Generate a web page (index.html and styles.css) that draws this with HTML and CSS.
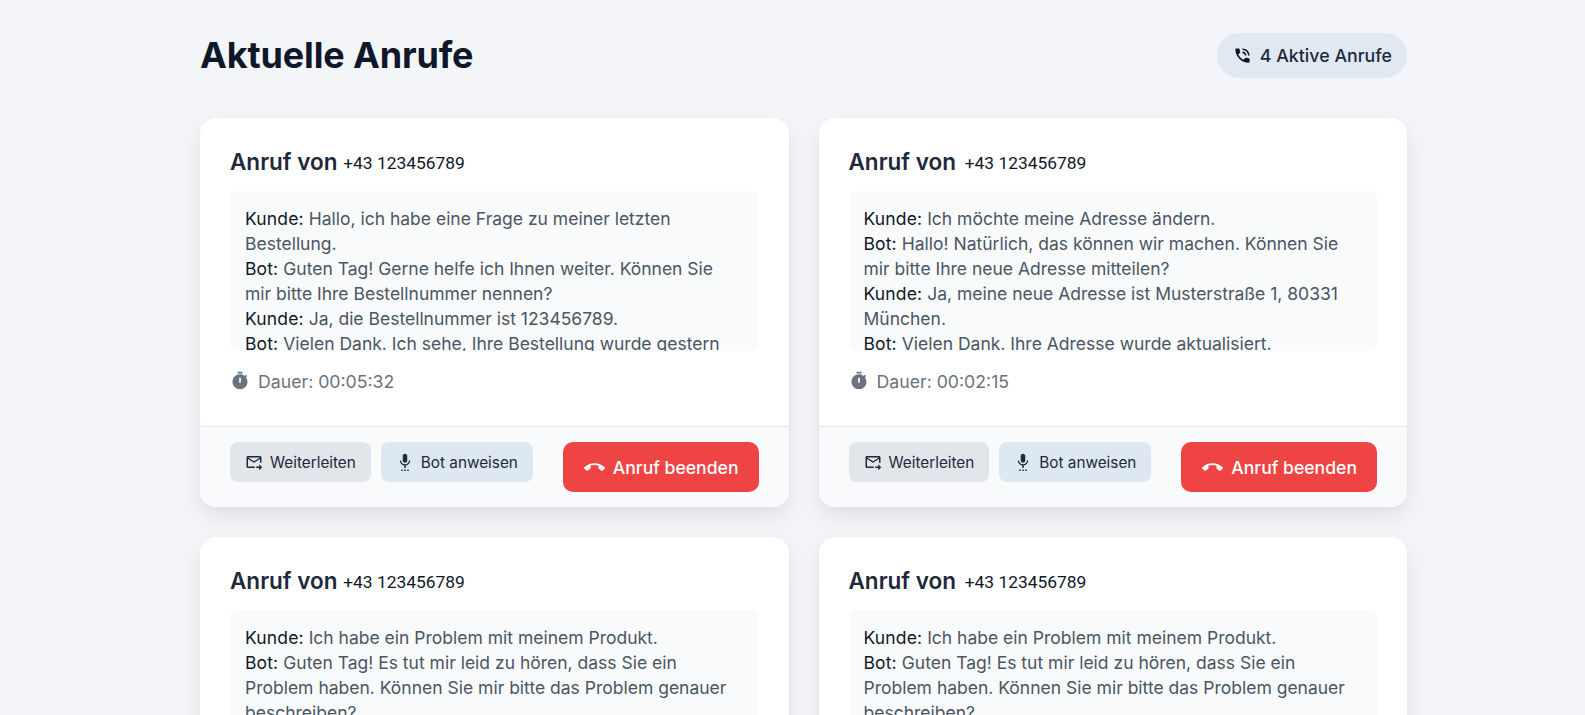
FILE: index.html
```html
<!DOCTYPE html>
<html lang="de">

<head>
    <meta charset="UTF-8">
    <title>Aktuelle Anrufe</title>
    <link rel="stylesheet" href="styles.css">
</head>

<body>
    <div class="page">
        <div class="head">
            <h1>Aktuelle Anrufe</h1>
            <div class="badge">
                <svg class="icon-phone" viewBox="0 0 24 24"><path d="M20 15.500c-1.250 0-2.450-.2-3.570-.57-.35-.11-.74-.03-1.020.24l-2.200 2.200c-2.830-1.440-5.150-3.750-6.590-6.590l2.200-2.210c.28-.26.36-.65.25-1C8.700 6.450 8.500 5.250 8.500 4c0-.55-.45-1-1-1H4c-.55 0-1 .45-1 1 0 9.390 7.610 17 17 17 .55 0 1-.45 1-1v-3.500c0-.55-.45-1-1-1zM19 12h2c0-4.970-4.030-9-9-9v2c3.870 0 7 3.130 7 7zm-4 0h2c0-2.760-2.240-5-5-5v2c1.660 0 3 1.340 3 3z"/></svg>
                4 Aktive Anrufe
            </div>
        </div>

        <div class="grid">
            <div class="card">
                <div class="card-body">
                    <h2>Anruf von <span class="nummer">+43 123456789</span></h2>
                    <div class="chat">
                        <b>Kunde:</b> Hallo, ich habe eine Frage zu meiner letzten Bestellung.<br>
                        <b>Bot:</b> Guten Tag! Gerne helfe ich Ihnen weiter. Können Sie mir bitte Ihre Bestellnummer nennen?<br>
                        <b>Kunde:</b> Ja, die Bestellnummer ist 123456789.<br>
                        <b>Bot:</b> Vielen Dank. Ich sehe, Ihre Bestellung wurde gestern versandt.
                    </div>
                    <div class="dauer">
                        <svg class="icon-timer" viewBox="0 0 24 24"><path fill-rule="evenodd" d="M15 1H9v2h6V1zm-4 13h2V8h-2v6zm8.030-6.610l1.420-1.420c-.43-.51-.9-.99-1.410-1.410l-1.420 1.420C16.070 4.740 14.120 4 12 4c-4.970 0-9 4.030-9 9s4.020 9 9 9 9-4.030 9-9c0-2.120-.74-4.070-1.970-5.610z"/></svg>
                        Dauer: 00:05:32
                    </div>
                </div>
                <div class="card-foot">
                    <div class="btn-group">
                        <button class="btn btn-grey">
                            <svg class="icon-btn" viewBox="0 0 24 24"><path d="M20 4H4c-1.100 0-2 .9-2 2v12c0 1.100.9 2 2 2h9v-2H4V8l8 5 8-5v5h2V6c0-1.100-.9-2-2-2zm-8 7L4 6h16l-8 5zm7 4l4 4-4 4v-3h-4v-2h4v-3z"/></svg>
                            Weiterleiten
                        </button>
                        <button class="btn btn-blue">
                            <svg class="icon-btn" viewBox="0 0 24 24"><path d="M7 24h2v-2H7v2zm5-11c1.660 0 2.990-1.340 2.990-3L15 4c0-1.660-1.340-3-3-3S9 2.340 9 4v6c0 1.660 1.340 3 3 3zm-1 11h2v-2h-2v2zm4 0h2v-2h-2v2zm4-14h-1.700c0 3-2.540 5.100-5.300 5.100S6.700 13 6.700 10H5c0 3.410 2.720 6.230 6 6.720V20h2v-3.280c3.280-.49 6-3.310 6-6.720z"/></svg>
                            Bot anweisen
                        </button>
                    </div>
                    <button class="btn-end">
                        <svg class="icon-end" viewBox="0 0 24 24"><path d="M12 9c-1.600 0-3.150.25-4.600.72v3.100c0 .39-.23.74-.56.9-.98.49-1.870 1.120-2.660 1.850-.18.18-.43.28-.7.28-.28 0-.53-.11-.71-.29L.29 13.080c-.18-.17-.29-.42-.29-.7 0-.28.11-.53.29-.71C3.340 8.780 7.460 7 12 7s8.660 1.780 11.710 4.670c.18.18.29.43.29.71 0 .28-.11.53-.29.71l-2.480 2.480c-.18.18-.43.29-.71.29-.27 0-.52-.11-.7-.28-.79-.74-1.690-1.360-2.670-1.850-.33-.16-.56-.5-.56-.9v-3.100C15.150 9.250 13.600 9 12 9z"/></svg>
                        Anruf beenden
                    </button>
                </div>
            </div>

            <div class="card">
                <div class="card-body">
                    <h2>Anruf von <span class="nummer">+43 123456789</span></h2>
                    <div class="chat">
                        <b>Kunde:</b> Ich möchte meine Adresse ändern.<br>
                        <b>Bot:</b> Hallo! Natürlich, das können wir machen. Können Sie mir bitte Ihre neue Adresse mitteilen?<br>
                        <b>Kunde:</b> Ja, meine neue Adresse ist Musterstraße 1, 80331 München.<br>
                        <b>Bot:</b> Vielen Dank. Ihre Adresse wurde aktualisiert.
                    </div>
                    <div class="dauer">
                        <svg class="icon-timer" viewBox="0 0 24 24"><path fill-rule="evenodd" d="M15 1H9v2h6V1zm-4 13h2V8h-2v6zm8.030-6.610l1.420-1.420c-.43-.51-.9-.99-1.410-1.410l-1.420 1.420C16.070 4.740 14.120 4 12 4c-4.970 0-9 4.030-9 9s4.020 9 9 9 9-4.030 9-9c0-2.120-.74-4.070-1.970-5.610z"/></svg>
                        Dauer: 00:02:15
                    </div>
                </div>
                <div class="card-foot">
                    <div class="btn-group">
                        <button class="btn btn-grey">
                            <svg class="icon-btn" viewBox="0 0 24 24"><path d="M20 4H4c-1.100 0-2 .9-2 2v12c0 1.100.9 2 2 2h9v-2H4V8l8 5 8-5v5h2V6c0-1.100-.9-2-2-2zm-8 7L4 6h16l-8 5zm7 4l4 4-4 4v-3h-4v-2h4v-3z"/></svg>
                            Weiterleiten
                        </button>
                        <button class="btn btn-blue">
                            <svg class="icon-btn" viewBox="0 0 24 24"><path d="M7 24h2v-2H7v2zm5-11c1.660 0 2.990-1.340 2.990-3L15 4c0-1.660-1.340-3-3-3S9 2.340 9 4v6c0 1.660 1.340 3 3 3zm-1 11h2v-2h-2v2zm4 0h2v-2h-2v2zm4-14h-1.700c0 3-2.540 5.100-5.300 5.100S6.700 13 6.700 10H5c0 3.410 2.720 6.230 6 6.720V20h2v-3.280c3.280-.49 6-3.310 6-6.720z"/></svg>
                            Bot anweisen
                        </button>
                    </div>
                    <button class="btn-end">
                        <svg class="icon-end" viewBox="0 0 24 24"><path d="M12 9c-1.600 0-3.150.25-4.600.72v3.100c0 .39-.23.74-.56.9-.98.49-1.870 1.120-2.660 1.850-.18.18-.43.28-.7.28-.28 0-.53-.11-.71-.29L.29 13.080c-.18-.17-.29-.42-.29-.7 0-.28.11-.53.29-.71C3.340 8.780 7.460 7 12 7s8.660 1.780 11.710 4.670c.18.18.29.43.29.71 0 .28-.11.53-.29.71l-2.480 2.480c-.18.18-.43.29-.71.29-.27 0-.52-.11-.7-.28-.79-.74-1.690-1.360-2.670-1.850-.33-.16-.56-.5-.56-.9v-3.100C15.150 9.250 13.600 9 12 9z"/></svg>
                        Anruf beenden
                    </button>
                </div>
            </div>

            <div class="card">
                <div class="card-body">
                    <h2>Anruf von <span class="nummer">+43 123456789</span></h2>
                    <div class="chat">
                        <b>Kunde:</b> Ich habe ein Problem mit meinem Produkt.<br>
                        <b>Bot:</b> Guten Tag! Es tut mir leid zu hören, dass Sie ein Problem haben. Können Sie mir bitte das Problem genauer beschreiben?
                    </div>
                </div>
            </div>

            <div class="card">
                <div class="card-body">
                    <h2>Anruf von <span class="nummer">+43 123456789</span></h2>
                    <div class="chat">
                        <b>Kunde:</b> Ich habe ein Problem mit meinem Produkt.<br>
                        <b>Bot:</b> Guten Tag! Es tut mir leid zu hören, dass Sie ein Problem haben. Können Sie mir bitte das Problem genauer beschreiben?
                    </div>
                </div>
            </div>
        </div>
    </div>
</body>

</html>
```

FILE: styles.css
```css
html,
body {
    height: 715px;
    margin: 0;
    overflow: hidden;
}

body {
    background-color: #f3f5f8;
    font-family: "Inter", "Liberation Sans", sans-serif;
    color: #0f172a;
}

.page {
    width: 1207px;
    margin-left: 200px;
    padding-top: 32px;
}

.head {
    display: flex;
    justify-content: space-between;
    align-items: center;
    margin-bottom: 40px;
}

h1 {
    margin: 0;
    font-size: 36px;
    line-height: 46px;
    font-weight: 700;
    letter-spacing: -0.15px;
}

.badge {
    display: flex;
    align-items: center;
    gap: 8px;
    height: 45px;
    padding: 0 15px 0 16px;
    box-sizing: border-box;
    border-radius: 23px;
    background-color: #e0e9f2;
    font-size: 17.8px;
    font-weight: 500;
    color: #1e293b;
}

.icon-phone {
    width: 19px;
    height: 19px;
    fill: #0f172a;
}

.grid {
    display: grid;
    grid-template-columns: 1fr 1fr;
    gap: 30px;
}

.card {
    border-radius: 16px;
    background-color: #fff;
    box-shadow: 0 10px 25px rgba(0, 0, 0, 0.08), 0 4px 6px rgba(0, 0, 0, 0.02);
    overflow: hidden;
}

.card-body {
    padding: 30px 30px 0;
}

h2 {
    margin: 0 0 15px;
    font-size: 22.5px;
    line-height: 28px;
    font-weight: 600;
    color: #1e293b;
}

.nummer {
    font-family: "Roboto", "Liberation Sans", sans-serif;
    font-size: 17.4px;
    line-height: 1;
    font-weight: 400;
    color: #0f172a;
    vertical-align: 1px;
}

.card:nth-child(even) .nummer {
    margin-left: 3px;
}

.chat {
    height: 160px;
    padding: 15px 15px 0;
    box-sizing: border-box;
    overflow: hidden;
    border-radius: 8px;
    background-color: #f8fafc;
    font-size: 17.5px;
    line-height: 25px;
    color: #4b5563;
}

.chat b {
    font-weight: 400;
    letter-spacing: 0.15px;
    color: #111827;
}

.dauer {
    display: flex;
    align-items: center;
    gap: 8px;
    height: 24px;
    margin-top: 18px;
    margin-bottom: 33px;
    font-size: 17.7px;
    color: #6b7280;
}

.icon-timer {
    width: 20px;
    height: 20px;
    fill: #6b7280;
}

.card-foot {
    display: flex;
    justify-content: space-between;
    height: 81px;
    padding: 15px 30px 0;
    box-sizing: border-box;
    border-top: 1px solid #e2e8f0;
    background-color: #f8fafc;
}

.btn-group {
    display: flex;
    align-items: flex-start;
    gap: 10px;
}

.btn,
.btn-end {
    display: flex;
    align-items: center;
    border: none;
    font-family: inherit;
    cursor: pointer;
}

.btn {
    gap: 7px;
    height: 40px;
    padding: 0 15px;
    border-radius: 8px;
    font-size: 15.3px;
    font-weight: 400;
    color: #1e293b;
}

.btn-grey {
    background-color: #e2e5ea;
}

.btn-blue {
    background-color: #dde8f2;
}

.icon-btn {
    width: 18px;
    height: 18px;
    fill: #1e293b;
}

.btn-end {
    gap: 8px;
    height: 50px;
    padding: 0 20px 0 21px;
    border-radius: 10px;
    background-color: #ef4444;
    font-size: 17.6px;
    font-weight: 500;
    color: #fff;
}

.icon-end {
    width: 21px;
    height: 21px;
    fill: #fff;
}
```
